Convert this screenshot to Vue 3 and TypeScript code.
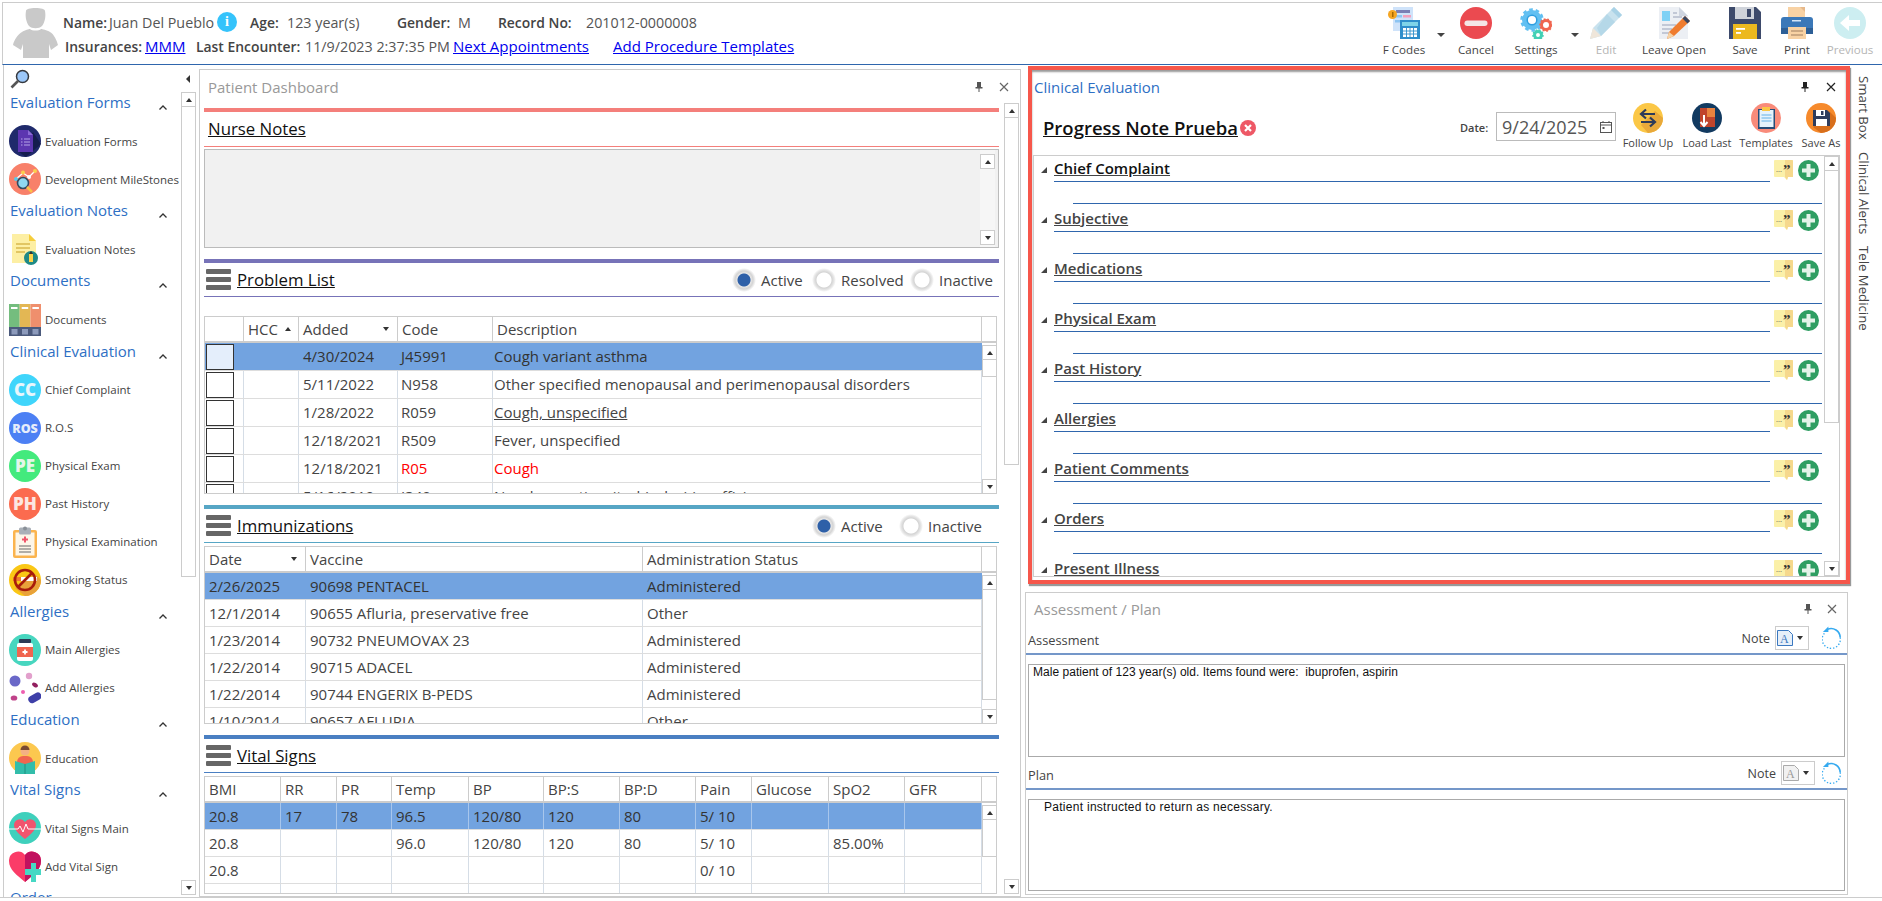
<script setup lang="ts">
const tools = [
  { id: 'fcodes', label: 'F Codes', icon: 'fcodes', caret: true },
  { id: 'cancel', label: 'Cancel', icon: 'cancel' },
  { id: 'settings', label: 'Settings', icon: 'settings', caret: true },
  { id: 'edit', label: 'Edit', icon: 'edit', off: true },
  { id: 'leave', label: 'Leave Open', icon: 'leave' },
  { id: 'save', label: 'Save', icon: 'save' },
  { id: 'print', label: 'Print', icon: 'print' },
  { id: 'prev', label: 'Previous', icon: 'prev', off: true },
]

const icons: Record<string, string> = {
  fcodes: `<rect x="5" y="0" width="20" height="24" fill="#cfe3fa"/><rect x="8" y="3" width="14" height="3" fill="#7a7fb5"/><rect x="15" y="8" width="8" height="2.5" fill="#f4a0bd"/><rect x="15" y="13" width="8" height="2.5" fill="#f4a0bd"/><rect x="7" y="8" width="7" height="2.5" fill="#8cc4f2"/><rect x="7" y="13" width="7" height="2.5" fill="#8cc4f2"/><circle cx="4.5" cy="7.5" r="4.5" fill="#f5a623"/><rect x="4" y="5" width="1.5" height="5" fill="#a86a00"/><rect x="12" y="13" width="20" height="19" fill="#2f8ecb"/><rect x="14" y="15" width="16" height="4" fill="#7fd4e8"/><path d="M15 21h14v9h-14z" fill="#fff"/><path d="M18.5 21v9M22 21v9M25.500 21v9M15 24h14M15 27h14" stroke="#2f8ecb" stroke-width=".9"/>`,
  cancel: `<circle cx="16" cy="16" r="16" fill="#eb4a50"/><rect x="4.500" y="13.500" width="23" height="5.500" rx="2.700" fill="#f4e6e6"/>`,
  settings: `<circle cx="12" cy="13" r="10" fill="none" stroke="#62c0f2" stroke-width="3.500" stroke-dasharray="3.500 2.800"/><circle cx="12" cy="13" r="7.500" fill="none" stroke="#62c0f2" stroke-width="5"/><circle cx="12" cy="13" r="4.800" fill="#fff" stroke="#2f9fe0" stroke-width="1.500"/><circle cx="26" cy="18" r="4.500" fill="none" stroke="#f0654f" stroke-width="3"/><circle cx="26" cy="18" r="6" fill="none" stroke="#f0654f" stroke-width="1.500" stroke-dasharray="1.800 1.800"/><circle cx="18" cy="28" r="3.500" fill="none" stroke="#43d0b5" stroke-width="3"/><circle cx="18" cy="28" r="5" fill="none" stroke="#43d0b5" stroke-width="1.500" stroke-dasharray="1.800 1.600"/>`,
  edit: `<path d="M24 0l8 8-21 21-11 3 3-11z" fill="#c8e2ee"/><path d="M24 0l8 8-3 3-8-8z" fill="#a9d2e6"/><path d="M3 21l8 8-11 3z" fill="#efe6da"/><path d="M17 7l8 8-14 14-4-8z" fill="#b5d8e8"/>`,
  leave: `<path d="M1 0h20l9 9v23h-29z" fill="#eceff4"/><path d="M21 0l9 9h-9z" fill="#cfd5e0"/><rect x="4" y="4" width="8" height="10" fill="#7fd1f5"/><path d="M15 6h4M15 10h9M4 18h14M4 22h10M4 26h8" stroke="#b4bccb" stroke-width="1.600"/><path d="M27 9l5 5-16 15-7 3 2-7z" fill="#ef7c2f"/><path d="M27 9l5 5-2.500 2.500-5-5z" fill="#3a4660"/><path d="M11 25l5 4-7 3z" fill="#f5d4a8"/>`,
  save: `<path d="M0 0h27l5 5v27h-32z" fill="#3d4a6b"/><rect x="6" y="0" width="19" height="12" fill="#cfd3da"/><rect x="18" y="2" width="4" height="8" fill="#3d4a6b"/><rect x="4" y="17" width="24" height="15" fill="#ecb91f"/><rect x="7" y="21" width="9" height="1.800" fill="#fff"/><rect x="7" y="25" width="5" height="1.800" fill="#fff"/>`,
  print: `<rect x="7" y="0" width="17" height="12" fill="#f8d2a4"/><path d="M24 0l-5 0 5 5z" fill="#e7b98b"/><path d="M3 10h26a3 3 0 0 1 3 3v13h-32v-13a3 3 0 0 1 3-3z" fill="#3b78b8"/><rect x="0" y="21" width="32" height="6" fill="#2d5f96"/><rect x="11" y="13" width="9" height="1.500" fill="#d5e6f7"/><rect x="7" y="20" width="18" height="12" fill="#f8d2a4"/><path d="M10 24h12M10 28h12" stroke="#a07f60" stroke-width="1.200"/>`,
  prev: `<circle cx="16" cy="16" r="16" fill="#cdeef1"/><path d="M6 16l9-8v5h11v6h-11v5z" fill="#fff"/>`,
  evalForms: `<circle cx="16" cy="16" r="16" fill="#1f2a6b"/><path d="M10 27l7 5 15-13-8-12z" fill="#151d4e"/><path d="M9 5h10l5 5v17h-15z" fill="#5c36b0"/><path d="M19 5l5 5h-5z" fill="#8b6ad6"/><path d="M15 14h6M15 17h6M15 20h6" stroke="#b6a5e8"/><path d="M12 14h1.500M12 17h1.500M12 20h1.500" stroke="#b6a5e8"/>`,
  devMile: `<circle cx="16" cy="16" r="16" fill="#f8806a"/><path d="M7 16l7-6 6 4 6-6" stroke="#fff" stroke-width="1.300" fill="none"/><circle cx="7" cy="16" r="2" fill="#5bc8e8"/><circle cx="14" cy="9.500" r="2" fill="#fbd04e"/><circle cx="20" cy="14" r="2" fill="#fff"/><circle cx="26" cy="8" r="2" fill="#fbd04e"/><circle cx="14" cy="20" r="5.500" fill="#8fd8f0" stroke="#34495e" stroke-width="1.600"/><path d="M18 24l5 5" stroke="#fbc048" stroke-width="2.500"/>`,
  evalNotes: `<path d="M3 1h17l7 7v22h-24z" fill="#fdefa4"/><path d="M20 1l7 7h-7z" fill="#f5cd3d"/><path d="M7 11h14M7 15h14M7 19h9" stroke="#d9b94d" stroke-width="1.500"/><circle cx="22" cy="25" r="7" fill="#1f8a86"/><path d="M20 21h4v8h-4z" fill="#fcd34a"/><path d="M20 21l2-3 2 3z" fill="#333"/>`,
  documents: `<rect width="10.700" height="24" fill="#74bd7e"/><rect x="10.700" width="10.700" height="24" fill="#e3b754"/><rect x="21.400" width="10.600" height="24" fill="#ef8f6d"/><rect x="2" y="3" width="6.500" height="2" fill="#fff"/><rect x="12.700" y="3" width="6.500" height="2" fill="#fff"/><rect x="23.400" y="3" width="6.500" height="2" fill="#fff"/><rect y="23" width="32" height="9" fill="#4b5a7c"/><rect x="2.500" y="25" width="6" height="5.500" fill="#8c9abb"/><rect x="13" y="25" width="6" height="5.500" fill="#8c9abb"/><rect x="23.500" y="25" width="6" height="5.500" fill="#8c9abb"/>`,
  cc: `<circle cx="16" cy="16" r="16" fill="#3fd5fb"/><text x="16" y="22" text-anchor="middle" font-family="Open Sans, sans-serif" font-weight="800" font-size="17" fill="#e8f6fb">CC</text>`,
  ros: `<circle cx="16" cy="16" r="16" fill="#4c80f4"/><text x="16" y="20.500" text-anchor="middle" font-family="Open Sans, sans-serif" font-weight="800" font-size="12.500" fill="#e6edfb">ROS</text>`,
  pe: `<circle cx="16" cy="16" r="16" fill="#43ea7d"/><text x="16" y="22" text-anchor="middle" font-family="Open Sans, sans-serif" font-weight="800" font-size="17" fill="#e4f6e9">PE</text>`,
  ph: `<circle cx="16" cy="16" r="16" fill="#fb6b4f"/><text x="16" y="22" text-anchor="middle" font-family="Open Sans, sans-serif" font-weight="800" font-size="17" fill="#fbe7e2">PH</text>`,
  physExam: `<rect x="4" y="4" width="24" height="28" rx="2" fill="#fbb44e"/><rect x="6.500" y="6.500" width="19" height="23" fill="#fdf6e8"/><rect x="10" y="1.500" width="12" height="7" rx="1.500" fill="#aab0b8"/><circle cx="16" cy="2.500" r="2" fill="#8a9098"/><path d="M16 10.500v6M13 13.500h6" stroke="#f0556a" stroke-width="2"/><path d="M10 20h12M10 23h12M10 26h12" stroke="#666" stroke-width="1.200"/>`,
  smoking: `<circle cx="16" cy="16" r="16" fill="#fac715"/><path d="M16 32a16 16 0 0 0 16-16l-6-6-20 14z" fill="#e9a23a"/><rect x="4" y="13" width="24" height="4" fill="#fff"/><rect x="4" y="13" width="8" height="4" fill="#ef7c2f"/><circle cx="16" cy="16" r="10" fill="none" stroke="#a81c0c" stroke-width="2.600"/><path d="M9 23l14-14" stroke="#a81c0c" stroke-width="2.600"/>`,
  mainAll: `<circle cx="16" cy="16" r="16" fill="#47d6bf"/><rect x="10" y="5" width="12" height="4" rx="1" fill="#2b3a55"/><rect x="8" y="9" width="16" height="18" rx="2" fill="#fff"/><rect x="8" y="13" width="16" height="10" fill="#f0654f"/><path d="M16 15.500v5M13.500 18h5" stroke="#fff" stroke-width="1.800"/>`,
  addAll: `<circle cx="6" cy="9" r="5.500" fill="#6a68c8"/><circle cx="20" cy="4" r="3.200" fill="#e2a0cc"/><ellipse cx="26" cy="13" rx="3.200" ry="2" transform="rotate(35 26 13)" fill="#92205f"/><circle cx="14" cy="20" r="2" fill="#ee5fb0"/><ellipse cx="5" cy="26" rx="3.300" ry="2.600" fill="#c0438a"/><rect x="19" y="22" width="14" height="7.500" rx="3.700" transform="rotate(-30 26 26)" fill="#3e3fa8"/>`,
  education: `<circle cx="16" cy="16" r="16" fill="#fcc84f"/><circle cx="16" cy="9" r="4.500" fill="#f4b183"/><path d="M11.500 8a4.500 4.500 0 0 1 9 0z" fill="#7a4a32"/><path d="M8 32v-12a6 6 0 0 1 6-6h4a6 6 0 0 1 6 6v12z" fill="#f0654f"/><path d="M6 19l10 3 10-3v13h-20z" fill="#32bdaa"/><path d="M16 22v10" stroke="#1f8f80"/>`,
  vitalMain: `<circle cx="16" cy="16" r="16" fill="#3fd0bc"/><path d="M16 27c-6-5-11-9-11-14a6 6 0 0 1 11-3 6 6 0 0 1 11 3c0 5-5 9-11 14z" fill="#f1556e"/><path d="M0 17h9l2-3 3 6 3-8 2 5h13" stroke="#fff" stroke-width="1" fill="none"/>`,
  addVital: `<path d="M16 32c-8-7-16-12-16-21a9 9 0 0 1 16-6 9 9 0 0 1 16 6c0 9-8 14-16 21z" fill="#fb3c68"/><path d="M16 5a9 9 0 0 1 16 6c0 9-8 14-16 21z" fill="#c1125f"/><path d="M22 13h5v6h5v6h-5v7h-5v-7h-6v-6h6z" fill="#46d8c4"/>`,
  followUp: `<circle cx="15" cy="15" r="15" fill="#fbc746"/><path d="M15 30a15 15 0 0 0 15-15l-8-7-14 14z" fill="#e9a93a"/><path d="M22 11h-13M13 6.500l-5 4.500 5 4.500M8 19h13M17 14.500l5 4.500-5 4.500" fill="none" stroke="#2d3b5a" stroke-width="2.200"/>`,
  loadLast: `<circle cx="15" cy="15" r="15" fill="#123a60"/><rect x="8" y="5" width="15" height="19" fill="#c0452c"/><rect x="15" y="5" width="8" height="9" fill="#e8833f"/><path d="M12 12v11M8.500 19l3.500 4 3.500-4" fill="none" stroke="#fff" stroke-width="2"/>`,
  templates: `<circle cx="15" cy="15" r="15" fill="#f98b7a"/><rect x="7" y="6" width="17" height="20" fill="#264c78"/><rect x="8.500" y="7" width="14" height="17" fill="#e6f3fc"/><rect x="11" y="4" width="8" height="4" fill="#fbc746"/><path d="M10.500 12h10M10.500 15h10M10.500 18h10" stroke="#8ec8ee" stroke-width="1.300"/>`,
  saveAs: `<circle cx="15" cy="15" r="15" fill="#f68a2c"/><path d="M15 30a15 15 0 0 0 15-15l-7-7-16 16z" fill="#d86f1c"/><path d="M7 7h14l3 3v13h-17z" fill="#2e3c5c"/><rect x="10" y="7" width="9" height="6" fill="#fff"/><rect x="15" y="8" width="2.500" height="4" fill="#2e3c5c"/><rect x="10" y="16" width="11" height="7" fill="#fff"/>`,
}

type Item = { label: string; icon: string }
const sections: { title: string; items: Item[] }[] = [
  { title: 'Evaluation Forms', items: [{ label: 'Evaluation Forms', icon: 'evalForms' }, { label: 'Development MileStones', icon: 'devMile' }] },
  { title: 'Evaluation Notes', items: [{ label: 'Evaluation Notes', icon: 'evalNotes' }] },
  { title: 'Documents', items: [{ label: 'Documents', icon: 'documents' }] },
  {
    title: 'Clinical Evaluation',
    items: [
      { label: 'Chief Complaint', icon: 'cc' },
      { label: 'R.O.S', icon: 'ros' },
      { label: 'Physical Exam', icon: 'pe' },
      { label: 'Past History', icon: 'ph' },
      { label: 'Physical Examination', icon: 'physExam' },
      { label: 'Smoking Status', icon: 'smoking' },
    ],
  },
  { title: 'Allergies', items: [{ label: 'Main Allergies', icon: 'mainAll' }, { label: 'Add Allergies', icon: 'addAll' }] },
  { title: 'Education', items: [{ label: 'Education', icon: 'education' }] },
  { title: 'Vital Signs', items: [{ label: 'Vital Signs Main', icon: 'vitalMain' }, { label: 'Add Vital Sign', icon: 'addVital' }] },
  { title: 'Order', items: [] },
]

const problems = [
  { date: '4/30/2024', code: 'J45991', desc: 'Cough variant asthma', sel: true },
  { date: '5/11/2022', code: 'N958', desc: 'Other specified menopausal and perimenopausal disorders' },
  { date: '1/28/2022', code: 'R059', desc: 'Cough, unspecified', link: true },
  { date: '12/18/2021', code: 'R509', desc: 'Fever, unspecified' },
  { date: '12/18/2021', code: 'R05', desc: 'Cough', red: true },
  { date: '5/16/2019', code: 'I340', desc: 'Nonrheumatic mitral (valve) insufficiency' },
]
const immunizations = [
  ['2/26/2025', '90698 PENTACEL', 'Administered'],
  ['12/1/2014', '90655 Afluria, preservative free', 'Other'],
  ['1/23/2014', '90732 PNEUMOVAX 23', 'Administered'],
  ['1/22/2014', '90715 ADACEL', 'Administered'],
  ['1/22/2014', '90744 ENGERIX B-PEDS', 'Administered'],
  ['1/10/2014', '90657 AFLURIA', 'Other'],
]
const vitalHead = ['BMI', 'RR', 'PR', 'Temp', 'BP', 'BP:S', 'BP:D', 'Pain', 'Glucose', 'SpO2', 'GFR']
const vitals = [
  ['20.8', '17', '78', '96.5', '120/80', '120', '80', '5/ 10', '', '', ''],
  ['20.8', '', '', '96.0', '120/80', '120', '80', '5/ 10', '', '85.00%', ''],
  ['20.8', '', '', '', '', '', '', '0/ 10', '', '', ''],
  ['70 in', '', '', '', '', '', '', '', '', '', ''],
]
const clinicalRows = ['Chief Complaint', 'Subjective', 'Medications', 'Physical Exam', 'Past History', 'Allergies', 'Patient Comments', 'Orders', 'Present Illness']
const clinicalActions = [
  { label: 'Follow Up', icon: 'followUp' },
  { label: 'Load Last', icon: 'loadLast' },
  { label: 'Templates', icon: 'templates' },
  { label: 'Save As', icon: 'saveAs' },
]
</script>

<template>
  <div class="page">
    <header class="top">
      <svg class="avatar" viewBox="0 0 45 51">
        <path d="M13 4c0-2 4-3 9.500-3S32 2 32 4c1 5 0 11-3 15-3 3-10 3-13 0-3-4-4-10-3-15z" fill="#c9c9c9" />
        <path d="M9 25c3-2 7-3 8-3 2 2 9 2 11 0 1 0 6 1 9 3 4 2 7 9 8 13l-7 5-2-6v14H10V37l-2 6-8-5c1-5 5-11 9-13z" fill="#c9c9c9" />
      </svg>
      <div class="who">
        <div class="line l1">
          <span class="lab w-name">Name:</span><span class="val w-juan">Juan Del Pueblo</span>
          <span class="info">i</span>
          <span class="lab w-age">Age:</span><span class="val w-years">123 year(s)</span>
          <span class="lab w-gender">Gender:</span><span class="val w-m">M</span>
          <span class="lab w-rec">Record No:</span><span class="val">201012-0000008</span>
        </div>
        <div class="line l2">
          <span class="lab w-ins">Insurances:</span><a class="lnk w-mmm">MMM</a>
          <span class="lab w-last">Last Encounter:</span><span class="val w-date">11/9/2023 2:37:35 PM</span>
          <a class="lnk w-next">Next Appointments</a><a class="lnk">Add Procedure Templates</a>
        </div>
      </div>
      <nav class="tools">
        <template v-for="t in tools" :key="t.id">
          <div class="tool" :class="['t-' + t.id, { off: t.off }]">
            <svg class="tool-ic" viewBox="0 0 32 32" v-html="icons[t.icon]"></svg>
            <span class="tool-lab">{{ t.label }}</span>
          </div>
          <span v-if="t.caret" class="caret" :class="'c-' + t.id"></span>
        </template>
      </nav>
    </header>

    <main class="main">
      <aside class="side">
        <div class="side-top">
          <svg class="mag" viewBox="0 0 20 20">
            <circle cx="12.500" cy="7.500" r="6" fill="#9cc8fa" stroke="#36393f" stroke-width="1.500" />
            <path d="M8 12l-6.500 6.500" stroke="#555" stroke-width="2.600" />
          </svg>
          <span class="collapse"></span>
        </div>
        <div class="side-body">
          <div class="side-list">
            <section v-for="s in sections" :key="s.title">
              <div class="side-h">
                <span>{{ s.title }}</span>
                <svg class="chev" viewBox="0 0 8 5"><path d="M.5 4.500l3.500-3.500 3.500 3.500" fill="none" stroke="#333" stroke-width="1.300" /></svg>
              </div>
              <div v-for="i in s.items" :key="i.label" class="side-i">
                <svg class="side-ic" viewBox="0 0 32 32" v-html="icons[i.icon]"></svg>
                <span>{{ i.label }}</span>
              </div>
            </section>
          </div>
          <div class="sb sb-side">
            <div class="sb-btn up"></div>
            <div class="sb-thumb th-side"></div>
            <div class="sb-btn down"></div>
          </div>
        </div>
      </aside>

      <section class="dash">
        <div class="ptitle">
          <span class="ptitle-t">Patient Dashboard</span>
          <svg class="pin" viewBox="0 0 8 10"><path d="M2 0h4v5h1.500v1.500h-3V10h-1V6.500h-3V5H2z" fill="#555" /></svg>
          <svg class="close" viewBox="0 0 10 10"><path d="M1 1l8 8M9 1l-8 8" stroke="#666" stroke-width="1.200" /></svg>
        </div>
        <div class="dash-body">
          <div class="dash-col">
            <div class="bar bar-red"></div>
            <div class="shead sh-red"><span class="stitle">Nurse Notes</span></div>
            <div class="nurse">
              <div class="sb sb-nurse">
                <div class="sb-btn up"></div>
                <div class="sb-btn down"></div>
              </div>
            </div>

            <div class="bar bar-purple"></div>
            <div class="shead sh-purple">
              <svg class="burger" viewBox="0 0 25 21"><rect width="25" height="5" rx="1" fill="#666" /><rect y="8" width="25" height="5" rx="1" fill="#666" /><rect y="16" width="25" height="5" rx="1" fill="#666" /></svg>
              <span class="stitle">Problem List</span>
              <div class="radios r-problem">
                <span class="radio on"></span><span class="r-lab rl-a">Active</span>
                <span class="radio"></span><span class="r-lab rl-b">Resolved</span>
                <span class="radio"></span><span class="r-lab rl-z">Inactive</span>
              </div>
            </div>
            <div class="tbl tbl-problem">
              <div class="hdr cols-problem">
                <div></div>
                <div class="hc">HCC<i class="mini up"></i></div>
                <div class="hc hc-sp">Added<i class="mini down"></i></div>
                <div class="hc">Code</div>
                <div class="hc">Description</div>
                <div class="nb"></div>
              </div>
              <div class="tb">
                <div class="rows">
                  <div v-for="p in problems" :key="p.date + p.code" class="row row-28 cols-problem-r" :class="{ sel: p.sel }">
                    <div class="c c-chk"><span class="chk"></span></div>
                    <div class="c"></div>
                    <div class="c">{{ p.date }}</div>
                    <div class="c c-code" :class="{ red: p.red }">{{ p.code }}</div>
                    <div class="c c-desc" :class="{ red: p.red, und: p.link }">{{ p.desc }}</div>
                  </div>
                </div>
                <div class="sb sb-t">
                  <div class="sb-btn up"></div>
                  <div class="sb-thumb th-problem"></div>
                  <div class="sb-btn down"></div>
                </div>
              </div>
            </div>

            <div class="bar bar-teal"></div>
            <div class="shead sh-teal">
              <svg class="burger" viewBox="0 0 25 21"><rect width="25" height="5" rx="1" fill="#666" /><rect y="8" width="25" height="5" rx="1" fill="#666" /><rect y="16" width="25" height="5" rx="1" fill="#666" /></svg>
              <span class="stitle">Immunizations</span>
              <div class="radios r-imm">
                <span class="radio on"></span><span class="r-lab rl-c">Active</span>
                <span class="radio"></span><span class="r-lab rl-z">Inactive</span>
              </div>
            </div>
            <div class="tbl tbl-imm">
              <div class="hdr cols-imm">
                <div class="hc hc-sp">Date<i class="mini down"></i></div>
                <div class="hc">Vaccine</div>
                <div class="hc">Administration Status</div>
                <div class="nb"></div>
              </div>
              <div class="tb">
                <div class="rows">
                  <div v-for="(r, n) in immunizations" :key="n" class="row row-27 cols-imm-r" :class="{ sel: n === 0 }">
                    <div v-for="(v, k) in r" :key="k" class="c">{{ v }}</div>
                  </div>
                </div>
                <div class="sb sb-t">
                  <div class="sb-btn up"></div>
                  <div class="sb-thumb th-imm"></div>
                  <div class="sb-btn down"></div>
                </div>
              </div>
            </div>

            <div class="bar bar-blue"></div>
            <div class="shead sh-blue">
              <svg class="burger" viewBox="0 0 25 21"><rect width="25" height="5" rx="1" fill="#666" /><rect y="8" width="25" height="5" rx="1" fill="#666" /><rect y="16" width="25" height="5" rx="1" fill="#666" /></svg>
              <span class="stitle">Vital Signs</span>
            </div>
            <div class="tbl tbl-vital">
              <div class="hdr cols-vital">
                <div v-for="h in vitalHead" :key="h" class="hc">{{ h }}</div>
                <div class="nb"></div>
              </div>
              <div class="tb">
                <div class="rows">
                  <div v-for="(r, n) in vitals" :key="n" class="row row-27 cols-vital-r" :class="{ sel: n === 0, 'sel-div': n === 0 }">
                    <div v-for="(v, k) in r" :key="k" class="c">{{ v }}</div>
                  </div>
                </div>
                <div class="sb sb-t">
                  <div class="sb-btn up"></div>
                  <div class="sb-thumb th-vital"></div>
                </div>
              </div>
            </div>
          </div>
          <div class="sb sb-dash">
            <div class="sb-btn up"></div>
            <div class="sb-thumb th-dash"></div>
            <div class="sb-btn down"></div>
          </div>
        </div>
      </section>

      <div class="rcol">
        <section class="clin">
          <div class="ptitle ptitle-clin">
            <span class="ptitle-b">Clinical Evaluation</span>
            <svg class="pin" viewBox="0 0 8 10"><path d="M2 0h4v5h1.500v1.500h-3V10h-1V6.500h-3V5H2z" fill="#222" /></svg>
            <svg class="close" viewBox="0 0 10 10"><path d="M1 1l8 8M9 1l-8 8" stroke="#222" stroke-width="1.200" /></svg>
          </div>
          <div class="prog">
            <span class="prog-t">Progress Note Prueba</span>
            <svg class="prog-x" viewBox="0 0 16 16"><circle cx="8" cy="8" r="8" fill="#ee5866" /><path d="M5 5l6 6M11 5l-6 6" stroke="#fff" stroke-width="2.200" /></svg>
            <span class="date-l">Date:</span>
            <div class="date-i">
              <span>9/24/2025</span>
              <svg viewBox="0 0 12 12" class="cal"><rect x=".5" y="1.500" width="11" height="10" fill="none" stroke="#555" /><path d="M0 4h12M3 0v2M9 0v2" stroke="#555" /><rect x="2.500" y="6" width="2" height="2" fill="#555" /></svg>
            </div>
            <div v-for="a in clinicalActions" :key="a.label" class="act">
              <svg viewBox="0 0 30 30" v-html="icons[a.icon]"></svg>
              <span>{{ a.label }}</span>
            </div>
          </div>
          <div class="cbox">
            <div class="clist">
              <div v-for="(c, n) in clinicalRows" :key="c" class="crow">
                <div class="chead">
                  <svg class="ctri" viewBox="0 0 6 6"><path d="M6 0v6H0z" fill="#444" /></svg>
                  <div class="ctitle"><span :class="{ first: n === 0 }">{{ c }}</span></div>
                  <svg class="cnote" viewBox="0 0 19 20"><path d="M1 0h17a1 1 0 0 1 1 1v16h-5l-1 3-3-3H1a1 1 0 0 1-1-1V1a1 1 0 0 1 1-1z" fill="#fbf0a8" /><path d="M11 0h7a1 1 0 0 1 1 1v16h-5l-1 3-2-3z" fill="#f6d88c" /><text x="2" y="12" font-family="Liberation Sans, sans-serif" font-size="7" fill="#333">...</text><text x="9" y="15" font-family="Liberation Serif, serif" font-weight="700" font-size="15" fill="#333">”</text></svg>
                  <svg class="cplus" viewBox="0 0 21 21"><circle cx="10.500" cy="10.500" r="10.500" fill="#2f9e62" /><path d="M10.500 4v13M4 10.500h13" stroke="#e4f3e9" stroke-width="4" /></svg>
                </div>
                <div class="cline"></div>
              </div>
            </div>
            <div class="sb sb-clin">
              <div class="sb-btn up"></div>
              <div class="sb-thumb th-clin"></div>
              <div class="sb-btn down"></div>
            </div>
          </div>
        </section>

        <section class="assess">
          <div class="ptitle ptitle-as">
            <span class="ptitle-t">Assessment / Plan</span>
            <svg class="pin" viewBox="0 0 8 10"><path d="M2 0h4v5h1.500v1.500h-3V10h-1V6.500h-3V5H2z" fill="#555" /></svg>
            <svg class="close" viewBox="0 0 10 10"><path d="M1 1l8 8M9 1l-8 8" stroke="#666" stroke-width="1.200" /></svg>
          </div>
          <div class="ahead">
            <span class="ahead-l">Assessment</span>
            <span class="note-l">Note</span>
            <div class="note-b">
              <svg viewBox="0 0 16 16" class="note-a"><path d="M.5.500h11l4 4v11H.5z" fill="#e6eff9" stroke="#3a78c0" /><text x="3" y="13" font-family="Liberation Serif, serif" font-size="12" fill="#3a78c0">A</text></svg>
              <i class="mini down dk"></i>
            </div>
            <svg class="refresh" viewBox="0 0 22 24"><path d="M6 3A10 10 0 0 1 20 12" fill="none" stroke="#35aaf0" stroke-width="1.800" /><path d="M20 12A10 10 0 1 1 3 7" fill="none" stroke="#35aaf0" stroke-width="1.500" stroke-dasharray="1.500 2" /><path d="M7 0v6H1z" fill="#35aaf0" /></svg>
          </div>
          <div class="atext">Male patient of 123 year(s) old. Items found were:&nbsp; ibuprofen, aspirin</div>
          <div class="ahead ahead-p">
            <span class="ahead-l">Plan</span>
            <span class="note-l">Note</span>
            <div class="note-b">
              <svg viewBox="0 0 16 16" class="note-a"><path d="M.5.500h11l4 4v11H.5z" fill="#f1f1f1" stroke="#aaa" /><text x="3" y="13" font-family="Liberation Serif, serif" font-size="12" fill="#999">A</text></svg>
              <i class="mini down dk"></i>
            </div>
            <svg class="refresh r2" viewBox="0 0 22 24"><path d="M6 3A10 10 0 0 1 20 12" fill="none" stroke="#35aaf0" stroke-width="1.800" /><path d="M20 12A10 10 0 1 1 3 7" fill="none" stroke="#35aaf0" stroke-width="1.500" stroke-dasharray="1.500 2" /><path d="M7 0v6H1z" fill="#35aaf0" /></svg>
          </div>
          <div class="atext ptext">Patient instructed to return as necessary.</div>
        </section>
      </div>

      <div class="vtabs">
        <span>Smart Box</span>
        <span>Clinical Alerts</span>
        <span>Tele Medicine</span>
      </div>
    </main>
  </div>
</template>

<style>
html, body { margin: 0; background: #fff; overflow: hidden; }
</style>

<style scoped>
.page { width: 1882px; height: 901px; display: flex; flex-direction: column; font-family: "Open Sans", sans-serif; color: #444; font-size: 15px; overflow: hidden; }

/* top bar */
.top { margin: 2px 0 0 2px; height: 63px; box-sizing: border-box; border-top: 1px solid #ccc; border-left: 1px solid #ccc; border-bottom: 1px solid #2f66ad; display: flex; }
.avatar { width: 45px; height: 51px; margin: 4px 0 0 10px; flex: none; }
.who { margin-left: 5px; flex: none; }
.line { display: flex; white-space: nowrap; align-items: center; height: 20px; }
.l1 { margin-top: 9px; }
.l2 { margin-top: 4px; margin-left: 2px; }
.lab { font-weight: 600; color: #444; flex: none; font-size: 13.900px; }
.val { color: #555; flex: none; font-size: 14.300px; }
.lnk { color: #0000ee; text-decoration: underline; flex: none; font-size: 15px; }
.w-name { width: 46px; } .w-juan { width: 108px; } .w-age { width: 37px; margin-left: 13px; } .w-years { width: 110px; } .w-gender { width: 61px; } .w-m { width: 40px; } .w-rec { width: 88px; }
.w-ins { width: 80px; } .w-mmm { width: 51px; } .w-last { width: 109px; } .w-date { width: 148px; } .w-next { width: 160px; }
.info { width: 20px; height: 20px; border-radius: 50%; background: #35c3fb; color: #fff; font: 700 14px "Liberation Serif", serif; text-align: center; line-height: 20px; flex: none; }
.tools { margin-left: auto; display: flex; padding-right: 7px; }
.tool { display: flex; flex-direction: column; align-items: center; flex: none; color: #444; font-size: 11.600px; }
.tool.off { color: #b5b5b5; }
.tool-ic { width: 32px; height: 32px; margin-top: 4px; flex: none; }
.tool-lab { margin-top: 3px; line-height: 16px; white-space: nowrap; }
.t-fcodes { width: 60px; } .t-cancel { width: 50px; margin-left: 4px; } .t-settings { width: 60px; margin-left: 5px; } .t-edit { width: 40px; margin-left: 5px; } .t-leave { width: 70px; margin-left: 13px; } .t-save { width: 50px; margin-left: 11px; } .t-print { width: 50px; margin-left: 2px; } .t-prev { width: 50px; margin-left: 3px; }
.caret { width: 0; height: 0; border: 4px solid transparent; border-top: 4px solid #444; border-bottom: 0; margin: 30px 2px 0; flex: none; }
.c-fcodes { margin-left: 3px; } .c-settings { margin-left: 5px; }

/* main */
.main { flex: none; height: 833px; display: flex; box-sizing: border-box; border-bottom: 1px solid #ccc; }
.side { width: 196px; margin-left: 3px; box-sizing: border-box; border-left: 1px solid #ccc; display: flex; flex-direction: column; flex: none; overflow: hidden; }
.side-top { height: 25px; display: flex; flex: none; }
.mag { width: 20px; height: 20px; margin: 4px 0 0 6px; }
.collapse { width: 0; height: 0; border: 4px solid transparent; border-right: 4px solid #333; border-left: 0; margin: 10px 0 0 156px; }
.side-body { display: flex; flex: 1; min-height: 0; }
.side-list { width: 177px; flex: none; overflow: hidden; height: 808px; }
.side-h { height: 32.200px; display: flex; color: #2e6fc4; font-size: 15px; line-height: 24px; padding-left: 6px; }
.chev { width: 8px; height: 5px; margin: 15px 14px 0 auto; }
.side-i { height: 38px; display: flex; align-items: center; font-size: 11.500px; color: #444; padding-left: 5px; white-space: nowrap; }
.side-ic { width: 32px; height: 32px; margin-right: 4px; flex: none; }

/* scrollbars */
.sb { width: 15px; display: flex; flex-direction: column; flex: none; box-sizing: border-box; }
.sb-btn { height: 15px; box-sizing: border-box; border: 1px solid #ccc; background: #fff; display: flex; align-items: center; justify-content: center; flex: none; }
.sb-btn::after { content: ""; border: 3.500px solid transparent; }
.sb-btn.up::after { border-bottom: 4px solid #333; border-top: 0; }
.sb-btn.down::after { border-top: 4px solid #333; border-bottom: 0; }
.sb-btn.down { margin-top: auto; }
.sb-thumb { border: 1px solid #ccc; border-top: 0; box-sizing: border-box; flex: none; }
.sb-side { margin: 2px 0 2px 0; height: 803px; }
.th-side { height: 470px; }
.th-dash { height: 347px; }
.th-problem { height: 17px; }
.th-imm { height: 110px; }
.th-vital { height: 37px; }
.th-clin { height: 252px; }

/* dashboard */
.dash { width: 822px; margin-top: 4px; height: 828px; box-sizing: border-box; border: 1px solid #ccc; flex: none; display: flex; flex-direction: column; overflow: hidden; }
.ptitle { height: 33px; flex: none; display: flex; align-items: center; padding: 0 11px 0 8px; box-sizing: border-box; }
.ptitle-t { color: #999; font-size: 15px; margin-right: auto; }
.pin { width: 8px; height: 10px; margin-right: 16px; flex: none; }
.close { width: 10px; height: 10px; flex: none; }
.dash-body { display: flex; flex: 1; min-height: 0; }
.dash-col { width: 795px; margin-left: 4px; padding-top: 5px; flex: none; overflow: hidden; height: 791px; box-sizing: border-box; }
.sb-dash { margin-left: 5px; height: 791px; }
.bar { height: 4px; }
.bar-red { background: #f47f7b; }
.bar-purple { background: #7773b8; margin-top: 11px; }
.bar-teal { background: #57a6c5; margin-top: 11px; }
.bar-blue { background: #4a7fc2; margin-top: 11px; }
.shead { height: 34px; box-sizing: border-box; display: flex; align-items: center; padding-left: 2px; border-bottom: 1px solid; }
.sh-red { border-color: #f47f7b; padding-left: 4px; margin-bottom: 2px; height: 35px; }
.sh-purple { border-color: #7773b8; }
.sh-teal { border-color: #57a6c5; }
.sh-blue { border-color: #4a7fc2; }
.stitle { color: #111; font-size: 16.800px; text-decoration: underline; line-height: 22px; }
.burger { width: 25px; height: 21px; margin-right: 6px; flex: none; }
.nurse { height: 99px; box-sizing: border-box; border: 1px solid #bbb; background: #f1f1f1; display: flex; justify-content: flex-end; padding-right: 3px; }
.sb-nurse { background: #f6f6f6; padding: 4px 0 2px; height: 97px; }
.radios { margin-left: auto; display: flex; align-items: center; }
.r-problem { padding-right: 9px; }
.r-imm { padding-right: 20px; }
.radio { width: 24px; height: 24px; border-radius: 50%; flex: none; background: radial-gradient(circle, #fff 0 7px, #d4d4d4 8px, #e6e6e6 10px, #fff 12px); margin-right: 5px; }
.radio.on { background: radial-gradient(circle, #2e60a8 0 6px, #e6e6e6 7px, #d4d4d4 9px, #fff 12px); }
.r-lab { font-size: 15px; color: #444; white-space: nowrap; flex: none; }
.rl-a { width: 51px; } .rl-b { width: 69px; } .rl-c { width: 58px; } .rl-z { width: 51px; }

/* tables */
.tbl { width: 793px; box-sizing: border-box; border: 1px solid #ccc; overflow: hidden; }
.tbl-problem { height: 178px; margin-top: 19px; }
.tbl-imm { height: 178px; margin-top: 3px; }
.tbl-vital { height: 118px; margin-top: 3px; }
.hdr { display: grid; height: 26px; box-sizing: border-box; border-bottom: 2px solid #ccc; }
.hdr > div { border-right: 1px solid #ccc; min-width: 0; }
.hdr > .nb { border-right: 0; }
.hc { padding-left: 4px; line-height: 26px; white-space: nowrap; color: #444; display: flex; align-items: center; gap: 3px; overflow: hidden; }
.hc-sp { justify-content: space-between; padding-right: 8px; }
.cols-problem { grid-template-columns: 39px 55px 99px 95px 489px 14px; }
.cols-imm { grid-template-columns: 101px 337px 339px 14px; }
.cols-vital { grid-template-columns: 76px 56px 55px 77px 75px 76px 76px 56px 77px 76px 77px 14px; }
.cols-problem-r { grid-template-columns: 39px 55px 99px 95px 489px; }
.cols-imm-r { grid-template-columns: 101px 337px 339px; }
.cols-vital-r { grid-template-columns: 76px 56px 55px 77px 75px 76px 76px 56px 77px 76px 77px; }
.mini { display: inline-block; width: 0; height: 0; border: 3.500px solid transparent; flex: none; }
.mini.up { border-bottom: 4px solid #333; border-top: 0; margin-left: 4px; }
.mini.down { border-top: 4px solid #333; border-bottom: 0; }
.tb { display: flex; }
.rows { width: 777px; flex: none; }
.row { display: grid; box-sizing: border-box; border-bottom: 1px solid #ddd; }
.row-28 { height: 28px; }
.row-27 { height: 27px; }
.c { border-right: 1px solid #d5dde6; padding-left: 4px; line-height: 27px; white-space: nowrap; overflow: hidden; color: #444; min-width: 0; }
.c-code { padding-left: 3px; }
.c-desc { padding-left: 1px; }
.row.sel { background: #72a3e0; }
.row.sel .c { border-right-color: transparent; color: #333; }
.row.sel-div .c { border-right-color: #a8c6ec; }
.c-chk { padding: 1px 0 0 1px; line-height: 0; }
.chk { display: block; width: 28px; height: 26px; box-sizing: border-box; border: 1px solid #333; background: #fff; }
.sel .chk { background: #e4eefb; }
.red { color: #f00 !important; }
.und { text-decoration: underline; }
.sb-t { margin: 2px 0 0 0; height: 149px; }
.tbl-imm .sb-t { height: 149px; }
.tbl-vital .sb-t { height: 90px; }

/* right column */
.rcol { width: 825px; margin-left: 4px; flex: none; display: flex; flex-direction: column; }
.clin { margin: 1px 0 0 3px; height: 518px; box-sizing: border-box; border: 4px solid #f6574b; box-shadow: inset 0 2px 2px #999, 1px 2px 1px #999; display: flex; flex-direction: column; overflow: hidden; flex: none; }
.ptitle-clin { padding: 0 10px 0 2px; }
.ptitle-b { color: #2e6fc4; font-size: 15px; margin-right: auto; }
.ptitle-clin .pin { margin-right: 17px; }
.prog { height: 52px; flex: none; display: flex; align-items: flex-start; padding-left: 11px; }
.prog-t { color: #111; font-weight: 600; font-size: 18.500px; line-height: 26px; margin-top: 12px; text-decoration: underline; white-space: nowrap; }
.prog-x { width: 16px; height: 16px; margin: 17px 0 0 2px; flex: none; }
.date-l { margin: 16px 0 0 auto; font-size: 11px; font-weight: 600; width: 36px; line-height: 18px; }
.date-i { width: 120px; height: 29px; margin: 9px 1px 0 0; box-sizing: border-box; border: 1px solid #bbb; display: flex; align-items: center; justify-content: space-between; padding: 0 3px 0 5px; font-size: 18px; color: #555; flex: none; }
.cal { width: 12px; height: 12px; }
.act { width: 56px; margin-left: 3px; display: flex; flex-direction: column; align-items: center; flex: none; font-size: 11px; white-space: nowrap; color: #444; }
.act svg { width: 30px; height: 30px; }
.act span { line-height: 14px; margin-top: 3px; }
.act:last-child { width: 50px; margin-left: 2px; }
.cbox { margin-left: 1px; width: 807px; height: 422px; box-sizing: border-box; border: 1px solid #ccc; display: flex; overflow: hidden; flex: none; }
.clist { width: 790px; flex: none; overflow: hidden; }
.crow { height: 50px; }
.chead { height: 26px; display: flex; align-items: flex-start; padding-left: 7px; }
.ctri { width: 6px; height: 6px; margin: 11px 7px 0 0; flex: none; }
.ctitle { width: 716px; height: 26px; box-sizing: border-box; border-bottom: 1px solid #2f66ad; flex: none; line-height: 25px; font-size: 15px; font-weight: 600; color: #444; text-decoration: underline; }
.ctitle .first { color: #111; }
.cnote { width: 19px; height: 20px; margin: 4px 0 0 4px; flex: none; }
.cplus { width: 21px; height: 21px; margin: 4px 0 0 5px; flex: none; }
.cline { margin: 21px 0 0 39px; width: 749px; height: 1px; background: #2f66ad; }
.sb-clin { margin-left: 0; height: 420px; }

.assess { margin-top: 8px; height: 303px; box-sizing: border-box; border: 1px solid #ccc; width: 823px; flex: none; overflow: hidden; }
.ptitle-as { padding: 0 10px 2px 8px; }
.ptitle-as .pin { margin-right: 15px; }
.ahead { height: 29px; box-sizing: border-box; border-bottom: 2px solid #7497c9; display: flex; align-items: flex-start; padding: 0 5px 0 2px; }
.ahead-p { height: 33px; margin-top: 0; padding-top: 4px; }
.ahead-l { font-size: 12.800px; margin-right: auto; line-height: 16px; margin-top: 6px; color: #444; }
.note-l { font-size: 12.500px; line-height: 16px; margin: 5px 5px 0 0; }
.note-b { width: 34px; height: 24px; box-sizing: border-box; border: 1px solid #ccc; display: flex; align-items: center; gap: 4px; padding-left: 1px; flex: none; }
.note-a { width: 16px; height: 16px; }
.refresh { width: 20px; height: 23px; margin-left: 13px; flex: none; }
.r2 { margin-left: 7px; }
.atext { margin: 9px 2px 0; height: 93px; box-sizing: border-box; border: 1px solid #aaa; font: 12px/15px "Liberation Sans", sans-serif; color: #111; padding-left: 4px; white-space: pre; letter-spacing: .03px; }
.ptext { height: 92px; padding-left: 15px; letter-spacing: .28px; }

/* vertical tabs */
.vtabs { margin: 11px 0 0 5px; display: flex; gap: 12px; writing-mode: vertical-rl; flex: none; height: 260px; font-size: 13.200px; color: #444; white-space: nowrap; }
</style>
